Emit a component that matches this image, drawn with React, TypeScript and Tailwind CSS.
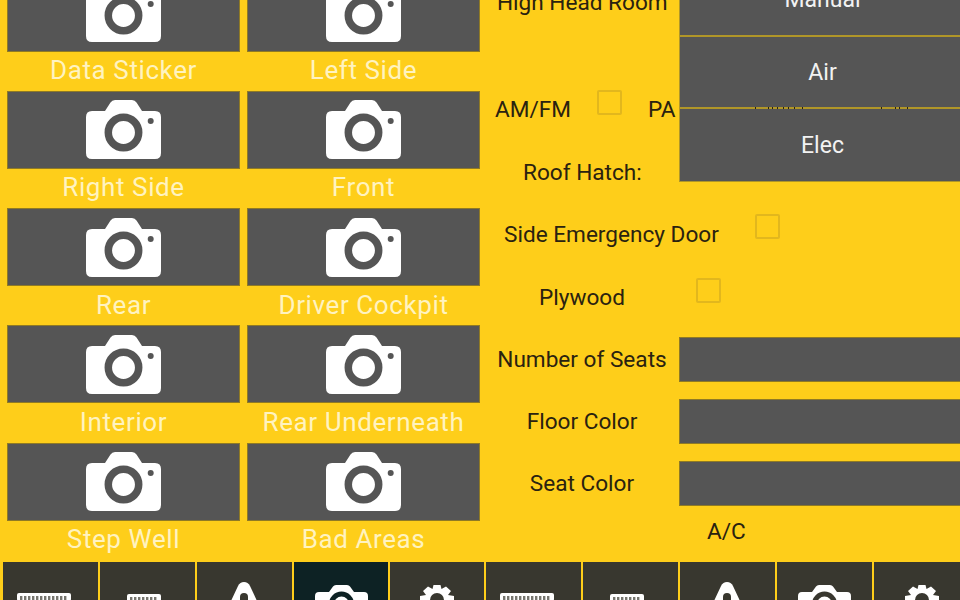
const font = { fontFamily: "Roboto, sans-serif" };

function Camera({ className = "" }: { className?: string }) {
  return (
    <svg viewBox="0 0 75 59" className={className} fill="none">
      <path fillRule="evenodd" fill="#fff" d="M6 11H19L24.5 2.5Q26 0 29 0H46Q49 0 50.5 2.5L56 11H69Q75 11 75 17V53Q75 59 69 59H6Q0 59 0 53V17Q0 11 6 11Z" />
      <circle cx="37.5" cy="32.5" r="15.2" fill="none" stroke="#555555" strokeWidth="7.5" />
      <circle cx="64.7" cy="21" r="3" fill="#555555" />
    </svg>
  );
}

function Tile({ label }: { label: string }) {
  return (
    <div className="flex flex-col">
      <div className="flex h-[78px] items-center justify-center border border-[#8f7a25] bg-[#555555]">
        <Camera className="h-[59px] w-[75px]" />
      </div>
      <div className="flex h-[39.25px] items-center justify-center pb-[2px] text-[26px] leading-none tracking-[0.6px] text-[#fff3c0]">{label}</div>
    </div>
  );
}

function Box() {
  return <div className="h-[25px] w-[25px] rounded-[2px] border-2 border-[#e2b71d]" />;
}

function Row({ children, className = "" }: { children: React.ReactNode; className?: string }) {
  return <div className={`flex h-[62.3px] shrink-0 items-center text-[22.6px] text-[#2a2210] ${className}`}>{children}</div>;
}

function Field({ label }: { label: string }) {
  return (
    <Row>
      <div className="w-[199px] pl-[5px] pt-[1px] text-center">{label}</div>
      <div className="h-[45px] flex-1 border border-r-0 border-[#8f7a25] bg-[#555555]" />
    </Row>
  );
}

function TabIcon({ kind }: { kind: string }) {
  if (kind === "wide" || kind === "narrow") {
    const w = kind === "wide" ? 54 : 34;
    return (
      <svg width={w} height="8" viewBox={`0 0 ${w} 8`} className={kind === "wide" ? "mt-[31px] -translate-x-[7px]" : "mt-[32px] -translate-x-[4px]"}>
        <rect width={w} height="8" rx="2" fill="#fff" />
        {Array.from({ length: Math.floor((w - 4) / 4) }, (_, i) => (
          <rect key={i} x={3 + i * 4} y="3" width="2.4" height="5" fill="#77766f" />
        ))}
      </svg>
    );
  }
  if (kind === "road") {
    return (
      <svg width="28" height="19" viewBox="0 0 28 19" className="mt-[20px] -translate-x-[1px]">
        <path d="M14 0Q18 0 20 4L27 19H1L8 4Q10 0 14 0Z" fill="#fff" />
        <path d="M14 11Q18 11 18 15V19H10V15Q10 11 14 11Z" fill="#38372f" />
      </svg>
    );
  }
  if (kind === "camera") {
    return (
      <svg width="53" height="16" viewBox="0 0 53 16" className="mt-[23px]">
        <path d="M4 7H14L18 1.5Q19 0 21 0H32Q34 0 35 1.5L39 7H49Q53 7 53 11V16H0V11Q0 7 4 7Z" fill="#fff" />
        <circle cx="26.5" cy="19" r="10" fill="none" stroke="currentColor" strokeWidth="5" />
      </svg>
    );
  }
  return (
    <svg width="34" height="15" viewBox="0 0 34 15" className="mt-[23px]">
      <path d="M13.5 0H20.5L21.5 4L26 1.5L31 6L28 10L34 11V15H0V11L6 10L3 6L8 1.5L12.5 4Z" fill="#fff" />
      <circle cx="17" cy="15" r="7" fill="currentColor" />
    </svg>
  );
}

function TabBar({ active }: { active: boolean }) {
  const kinds = ["wide", "narrow", "road", "camera", "gear"];
  return (
    <>
      {kinds.map((k) => {
        const on = active && k === "camera";
        const narrow = active && (k === "camera" || k === "gear");
        return (
          <div
            key={k}
            className={`flex h-full shrink-0 justify-center ${narrow ? "w-[94px]" : "w-[95px]"} ${on ? "bg-[#0d2224] text-[#0d2224]" : "bg-[#38372f] text-[#38372f]"}`}
          >
            <TabIcon kind={k} />
          </div>
        );
      })}
    </>
  );
}

const tiles = ["Data Sticker", "Left Side", "Right Side", "Front", "Rear", "Driver Cockpit", "Interior", "Rear Underneath", "Step Well", "Bad Areas"];

const specks = [755, 768, 772, 777, 783, 788, 794, 802, 881, 895, 899, 907];

export default function App() {
  return (
    <div style={font} className="relative flex h-[600px] w-[960px] flex-col overflow-hidden bg-[#fece1a]">
      <div className="flex h-[562px] shrink-0">
        <div className="-mt-[26.5px] grid h-[589px] w-[480px] shrink-0 grid-cols-2 content-start gap-x-[7px] pl-[7px]">
          {tiles.map((t) => <Tile key={t} label={t} />)}
        </div>
        <div className="-mt-[27px] flex min-w-0 flex-1 flex-col">
          <div className="flex h-[60px] shrink-0 items-center pl-[17px] text-[22.6px] text-[#2a2210]">
            <span>High Head Room</span>
          </div>
          <Row className="mt-[46px] pl-[15px]">
            <span>AM/FM</span>
            <div className="ml-[26px] -translate-y-[8px]"><Box /></div>
            <span className="ml-[26px]">PA</span>
          </Row>
          <Row className="pl-[43px]"><span>Roof Hatch:</span></Row>
          <Row className="pl-[24px]">
            <span className="pt-[1px]">Side Emergency Door</span>
            <div className="ml-[36px] -translate-y-[8px]"><Box /></div>
          </Row>
          <Row className="pl-[59px]">
            <span className="pt-[1px]">Plywood</span>
            <div className="ml-[71px] -translate-y-[7px]"><Box /></div>
          </Row>
          <Field label="Number of Seats" />
          <Field label="Floor Color" />
          <Field label="Seat Color" />
          <div className="flex h-[33px] shrink-0 items-center pl-[227px] text-[22.6px] text-[#2a2210]">A/C</div>
        </div>
      </div>
      <div className="flex h-[38px] shrink-0 gap-[2px] overflow-hidden pl-[3px]">
        <TabBar active />
        <TabBar active={false} />
      </div>
      <div className="absolute left-[679px] top-0 flex w-[281px] flex-col bg-[#b09628] pb-[1px] pl-[1px]">
        <div className="flex h-[35px] items-end justify-center bg-[#555555] pb-[24px] pl-[5px] text-[23px] leading-none text-[#f2f2f2]">Manual</div>
        <div className="mt-[2px] flex h-[70px] items-center justify-center bg-[#555555] pl-[5px] pt-[2px] text-[23px] text-[#f2f2f2]">Air</div>
        <div className="mt-[2px] flex h-[72px] items-center justify-center bg-[#555555] pl-[5px] pt-[2px] text-[23px] text-[#f2f2f2]">Elec</div>
      </div>
      {specks.map((x) => (
        <div key={x} className="absolute top-[107px] h-[2px] w-[1px] bg-[#2a2210]" style={{ left: x }} />
      ))}
    </div>
  );
}
